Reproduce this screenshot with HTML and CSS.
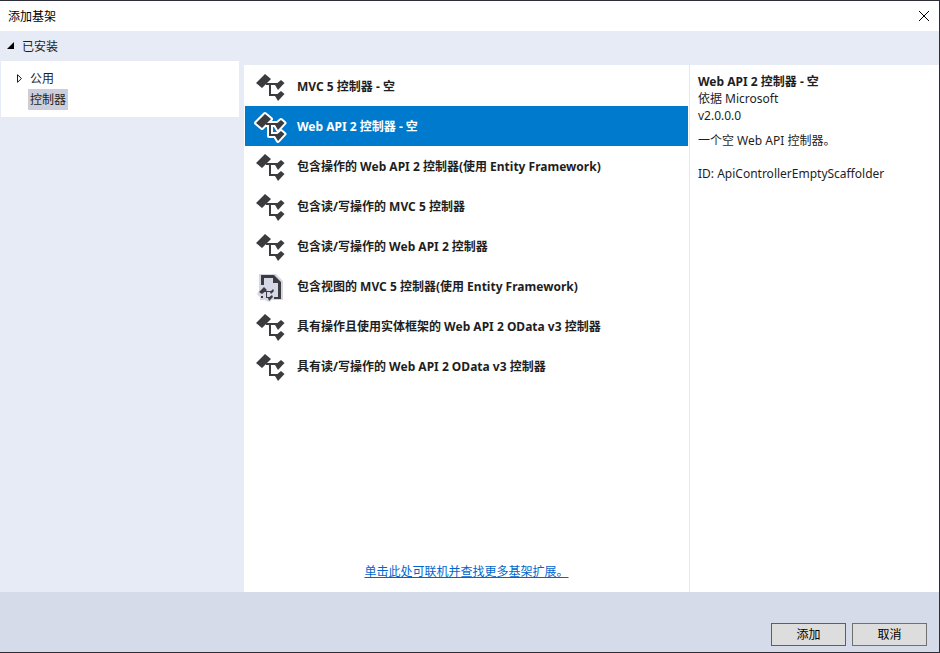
FILE: index.html
```html
<!DOCTYPE html>
<html lang="zh-CN">
<head>
<meta charset="utf-8">
<title>添加基架</title>
<link rel="stylesheet" href="styles.css">
</head>
<body>
<svg class="defs" width="0" height="0" aria-hidden="true">
  <symbol id="controller" viewBox="0 0 40 40">
    <path d="M6 17L15 8L21 13L12 22ZM25 19L31 14L34.500 17L28 24ZM25 30L31 25L34.500 28L28 35Z"/>
    <path d="M16 17H28V19H21V28H28V30H19V19H16Z"/>
  </symbol>
  <symbol id="view" viewBox="0 0 40 40">
    <path class="halo" d="M9 8H26L33 15V34H22L19 36L15 34H10V31L7 28L9 25Z"/>
    <path d="M11 9H24L31 16V33H24V31H28V17H23V12H14V19H11Z"/>
    <path d="M9 26L14 21L17 24L12 28ZM20 26L23 23L24 25L21 28ZM18 32L22 29L23 31L19 35ZM11 30H13V32H11Z"/>
    <path d="M14 25H21V26H17V31H20V32H16V26H14Z"/>
  </symbol>
</svg>
<div class="dialog">
  <header class="titlebar">
    <h1>添加基架</h1>
    <button class="close" type="button" aria-label="关闭"><svg width="12" height="12" viewBox="0 0 12 12"><path d="M1 1L11 11M11 1L1 11"/></svg></button>
  </header>
  <main class="content">
    <nav class="sidebar">
      <button class="group" type="button"><svg width="8" height="8" viewBox="0 0 8 8"><path d="M7 0V7H0Z"/></svg>已安装</button>
      <ul class="tree">
        <li><a href="#common"><svg width="6" height="9" viewBox="0 0 6 9"><path d="M.5.7V8.300L4.500 4.500Z"/></svg><span>公用</span></a></li>
        <li><a href="#controllers"><i></i><span class="current">控制器</span></a></li>
      </ul>
    </nav>
    <section class="templates">
      <ul class="list">
        <li><button type="button"><svg><use href="#controller"/></svg>MVC 5 控制器 - 空</button></li>
        <li><button type="button" class="selected"><svg><use class="outline" href="#controller"/><use href="#controller"/></svg>Web API 2 控制器 - 空</button></li>
        <li><button type="button"><svg><use href="#controller"/></svg>包含操作的 Web API 2 控制器(使用 Entity Framework)</button></li>
        <li><button type="button"><svg><use href="#controller"/></svg>包含读/写操作的 MVC 5 控制器</button></li>
        <li><button type="button"><svg><use href="#controller"/></svg>包含读/写操作的 Web API 2 控制器</button></li>
        <li><button type="button"><svg><use href="#view"/></svg>包含视图的 MVC 5 控制器(使用 Entity Framework)</button></li>
        <li><button type="button"><svg><use href="#controller"/></svg>具有操作且使用实体框架的 Web API 2 OData v3 控制器</button></li>
        <li><button type="button"><svg><use href="#controller"/></svg>具有读/写操作的 Web API 2 OData v3 控制器</button></li>
      </ul>
      <a class="online" href="#online">单击此处可联机并查找更多基架扩展。</a>
    </section>
    <aside class="details">
      <h2>Web API 2 控制器 - 空</h2>
      <p>依据 Microsoft</p>
      <p>v2.0.0.0</p>
      <p class="description">一个空 Web API 控制器。</p>
      <p class="identifier">ID: ApiControllerEmptyScaffolder</p>
    </aside>
  </main>
  <footer class="actions">
    <button type="button" class="primary">添加</button>
    <button type="button">取消</button>
  </footer>
</div>
</body>
</html>
```
FILE: styles.css
```css
* { box-sizing: border-box; }

body, h1, h2, p, ul { margin: 0; padding: 0; }

body, button {
  font: 12px/17px "Noto Sans", "Noto Sans CJK SC", sans-serif;
  color: #1e1e1e;
}

ul { list-style: none; }
button { border: 0; background: none; padding: 0; }
.defs { position: absolute; }

.dialog {
  display: flex;
  flex-direction: column;
  min-height: 100vh;
  border: solid #2d2d38;
  border-width: 1px 1px 1px 0;
  background: #e6ebf5;
}

.titlebar {
  display: flex;
  justify-content: space-between;
  align-items: center;
  height: 30px;
  padding: 0 8px;
  background: #fff;
  color: #000;
}

h1 { font-size: 12px; font-weight: 400; }
.close { display: flex; padding: 1px; }
.close path { stroke: #000; fill: none; }

.content {
  flex: 1;
  display: grid;
  grid-template-columns: 239px minmax(0, 446fr) minmax(0, 244fr);
  column-gap: 5px;
}

.group {
  display: flex;
  align-items: center;
  gap: 7px;
  height: 30px;
  padding-left: 7px;
}

.tree {
  margin-left: 1px;
  height: 56px;
  padding: 7px 0 0 16px;
  background: #fff;
}

.tree a {
  display: flex;
  align-items: center;
  height: 21px;
  color: #1e1e1e;
  text-decoration: none;
}

.tree svg, .tree i { width: 6px; margin-right: 5px; }
.tree path { fill: none; stroke: #1e1e1e; }
.tree span { padding: 2px; }
.current { background: #cccedb; }

.templates {
  display: flex;
  flex-direction: column;
  justify-content: space-between;
  margin-top: 34px;
  padding: 1px 1px 12px;
  background: #fff;
  border-right: 1px solid #e6e9ee;
}

.list button {
  display: flex;
  align-items: center;
  gap: 7px;
  width: 100%;
  height: 40px;
  padding-left: 5px;
  font-weight: 700;
  text-align: left;
}

.list svg { width: 40px; height: 40px; fill: #3c3c3f; }
.list .selected { background: #007acc; color: #fff; }
.outline { fill: #fff; stroke: #fff; stroke-width: 4px; stroke-linejoin: round; }
.halo { fill: #d5d7e6; }
.online { align-self: center; color: #06c; }

.details {
  margin: 34px 0 0 -5px;
  padding: 8px;
  background: #fff;
}

h2 { font-size: 12px; font-weight: 700; }
.description { margin-top: 8px; }
.identifier { margin-top: 16px; }

.actions {
  display: flex;
  justify-content: flex-end;
  align-items: flex-end;
  gap: 6px;
  height: 60px;
  padding: 0 12px 6px;
  background: #d6dbe9;
}

.actions button {
  width: 75px;
  height: 23px;
  border: 1px solid #707070;
  background: #ddd;
  color: #000;
}

.actions .primary { border-color: #0078d7; }
```
